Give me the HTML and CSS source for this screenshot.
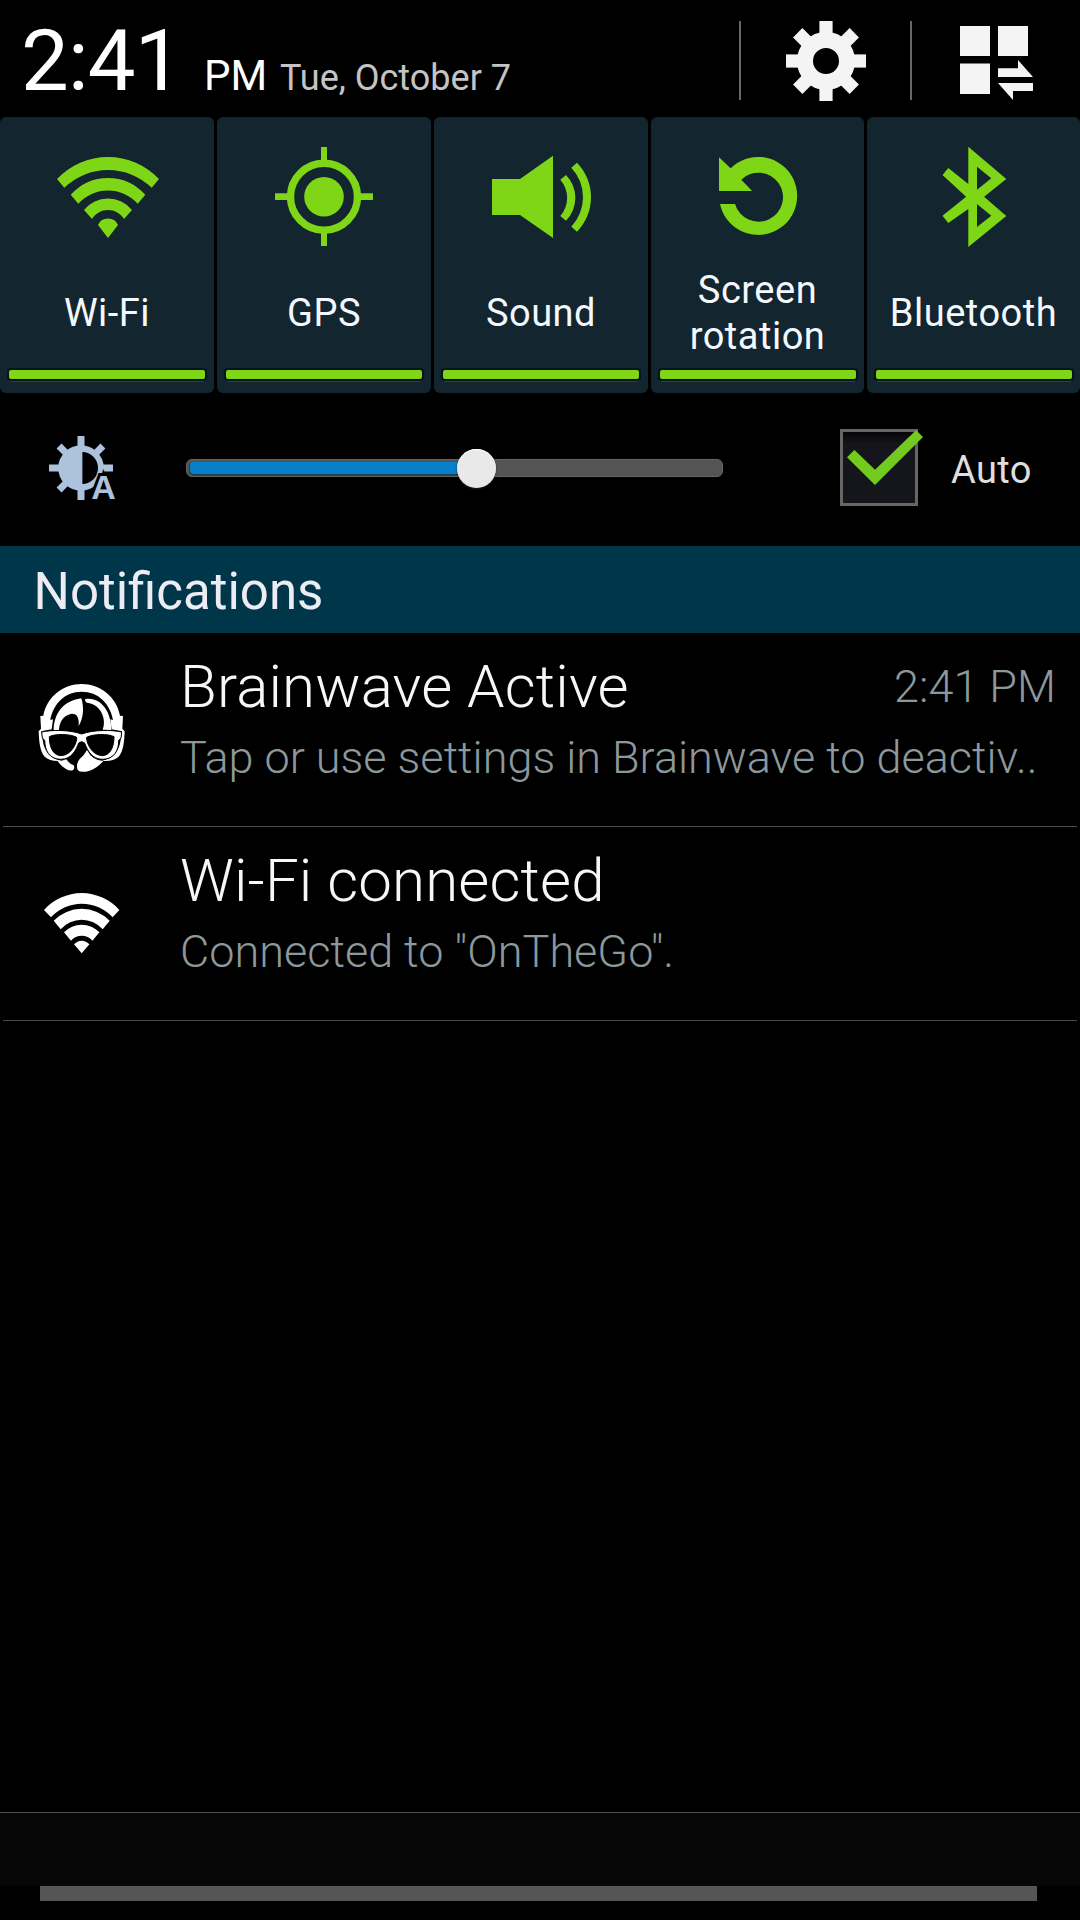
FILE: index.html
```
<!DOCTYPE html>
<html lang="en">
<head>
    <meta charset="UTF-8">
    <meta name="viewport" content="width=device-width, initial-scale=1.0">
    <title>Notifications</title>
    <link rel="stylesheet" href="styles.css">
</head>
<body>
    <header class="topbar">
        <span class="clock">2:41</span>
        <span class="ampm">PM</span>
        <span class="date">Tue, October 7</span>
        <div class="top-actions">
            <div class="action">
                <svg width="80" height="80" viewBox="-40 -40 80 80" fill="#f4f4f4">
                    <g id="teeth">
                        <rect x="-6.6" y="-40" width="13.2" height="17"/>
                        <rect x="-6.6" y="23" width="13.2" height="17"/>
                        <rect x="-40" y="-6.6" width="17" height="13.2"/>
                        <rect x="23" y="-6.6" width="17" height="13.2"/>
                    </g>
                    <use href="#teeth" transform="rotate(45)"/>
                    <circle r="21" fill="none" stroke="#f4f4f4" stroke-width="16"/>
                </svg>
            </div>
            <div class="action">
                <svg width="74" height="75" viewBox="0 0 74 75" fill="#f4f4f4">
                    <path d="M0 0H30V30H0ZM38 0H68V30H38ZM0 37.5H30V68H0ZM38 42.3H58V34L73 51H38ZM38 57H73V65H53V74Z"/>
                </svg>
            </div>
        </div>
    </header>

    <div class="toggles">
        <div class="toggle">
            <svg class="toggle-icon" viewBox="0 0 110 110">
                <path d="M5 37A70 70 0 0 1 107 37L99.7 45.7A63 63 0 0 0 12.3 45.7ZM18.7 52.7A50 50 0 0 1 93.3 52.7L85.7 61.7A40 40 0 0 0 26.3 61.7ZM32 68A31 31 0 0 1 80 68L72 77A18.7 18.7 0 0 0 40 77ZM46 83A11 11 0 0 1 66 83L56 96Z"/>
            </svg>
            <div class="toggle-label">Wi-Fi</div>
            <div class="toggle-bar"></div>
        </div>
        <div class="toggle">
            <svg class="toggle-icon" viewBox="0 0 110 110">
                <circle cx="55" cy="54.7" r="33.5" fill="none" stroke="#7fd616" stroke-width="7.4"/>
                <circle cx="55" cy="54.7" r="19.8"/>
                <path d="M52 5H58V19H52ZM52 91H58V104H52ZM6 51.2H20V58H6ZM91 51.2H104V58H91Z"/>
            </svg>
            <div class="toggle-label">GPS</div>
            <div class="toggle-bar"></div>
        </div>
        <div class="toggle">
            <svg class="toggle-icon" viewBox="0 0 110 110">
                <path d="M6 37H34L67 13.7V96L34 73H6ZM80 33A32.6 32.6 0 0 1 80 78.7L74.3 74A27.4 27.4 0 0 0 74.3 37.7ZM91 20.7A49.5 49.5 0 0 1 91 89.7L85.3 84.7A43 43 0 0 0 85.3 25.7Z"/>
            </svg>
            <div class="toggle-label">Sound</div>
            <div class="toggle-bar"></div>
        </div>
        <div class="toggle">
            <svg class="toggle-icon" viewBox="0 0 110 110">
                <path d="M16 15.3L27.6 26.3A39 39 0 1 1 17 62H32A24.5 24.5 0 1 0 38.3 37.7L49.1 49H16Z"/>
            </svg>
            <div class="toggle-label">Screen<br>rotation</div>
            <div class="toggle-bar"></div>
        </div>
        <div class="toggle">
            <svg class="toggle-icon" viewBox="0 0 110 110">
                <path fill-rule="evenodd" d="M49.3 4.7L87.3 37L65.1 54.7L87.3 74L49.3 105V67L29.3 81L23.5 73.7L47.1 54.7L23.5 33L29.3 26L49.3 42ZM58 24.7V47.7L72.3 36.3ZM58 62V85L72.3 73.7Z"/>
            </svg>
            <div class="toggle-label">Bluetooth</div>
            <div class="toggle-bar"></div>
        </div>
    </div>

    <div class="brightness">
        <svg class="brightness-icon" width="70" height="66" viewBox="-32 -32 70 66" fill="#adc2dc">
            <path d="M-3.5 -32H3.5V-20H-3.5ZM-3.5 20H3.5V32H-3.5ZM-32 -3.5H-20V3.5H-32ZM20 -3.5H32V3.5H20Z"/>
            <path d="M-3.5 -31H3.5V-20H-3.5ZM-3.5 20H3.5V31H-3.5ZM-31 -3.5H-20V3.5H-31ZM20 -3.5H31V3.5H20Z" transform="rotate(45)"/>
            <circle r="22.8"/>
            <path d="M1.4 -16A15.6 16 0 0 1 1.4 16Z" fill="#000"/>
            <text class="auto-letter" x="10.2" y="31">A</text>
        </svg>
        <div class="slider">
            <div class="slider-fill"></div>
            <div class="slider-thumb"></div>
        </div>
        <div class="checkbox">
            <svg class="check" width="80" height="58" viewBox="0 0 80 58">
                <path d="M1 28.3L8.5 21L29 40.7L70 1.3L77 8L29 56Z" fill="#72cb1e"/>
            </svg>
        </div>
        <span class="auto-label">Auto</span>
    </div>

    <h2 class="section-title">Notifications</h2>

    <div class="notification">
        <div class="notif-icon">
            <svg width="130" height="120" viewBox="0 0 390 360" fill="#fff">
                <!-- headphones -->
                <path d="M70 137C80 80 130 42 185 42C240 42 290 80 300 137L309 138L307 176L314 184C313 215 310 245 296 260C285 270 265 275 246 272C275 268 298 245 302 210L306 184L275 178L271 148L279 150C270 100 235 65 185 65C135 65 100 100 91 150L99 148L95 178L64 184L68 210C72 245 95 268 124 272C105 275 85 270 74 260C60 245 57 215 56 184L63 176L61 138Z"/>
                <!-- hair -->
                <path d="M101 180C102 135 125 93 184 85C193 115 190 145 176 168C178 142 170 129 152 132C128 138 118 158 117 180Z"/>
                <path d="M196 87C243 80 274 125 274 180L248 179C260 150 245 103 201 98Q193 93 196 87Z"/>
                <!-- glasses -->
                <path stroke="#000" stroke-width="3" fill-rule="evenodd" d="M65 186C95 179 150 179 185 192C220 179 275 179 305 186L303 204L296 211C296 242 283 267 248 268C215 268 202 240 194 219Q185 211 176 219C168 240 155 268 122 268C87 267 75 242 74 211L67 204ZM88 200C105 191 150 191 170 202C172 215 156 257 122 257C96 255 88 226 88 200ZM282 200C265 191 220 191 200 202C198 215 214 257 248 257C274 255 282 226 282 200Z"/>
                <!-- chin -->
                <path d="M113 274Q128 273 139 268Q148 281 161 286Q165 293 160 299Q153 305 138 297Q122 287 113 274Z"/>
                <path d="M201 240Q216 271 250 273Q232 294 209 302Q182 310 173 300Q167 281 179 267Q192 257 201 240Z"/>
            </svg>
        </div>
        <div class="notif-body">
            <div class="notif-head">
                <span class="notif-title">Brainwave Active</span>
                <span class="notif-time">2:41 PM</span>
            </div>
            <div class="notif-text">Tap or use settings in Brainwave to deactiv..</div>
        </div>
    </div>

    <div class="notification">
        <div class="notif-icon">
            <svg class="wifi-small" width="84" height="66" viewBox="0 0 84 66" fill="#fff">
                <path d="M4 20A50.4 50.4 0 0 1 79.4 20L72.6 27.3A42 42 0 0 0 11 27.3ZM13.7 30.7A39 39 0 0 1 69.7 30.7L62.7 39.3A27.8 27.8 0 0 0 20.7 39.3ZM24 42.3A24.4 24.4 0 0 1 59.4 42.3L52.4 50.7A14 14 0 0 0 31 50.7ZM34 54.3A10 10 0 0 1 49.4 54.3L41.7 63.3Z"/>
            </svg>
        </div>
        <div class="notif-body">
            <div class="notif-head">
                <span class="notif-title">Wi-Fi connected</span>
            </div>
            <div class="notif-text">Connected to "OnTheGo".</div>
        </div>
    </div>

    <footer class="bottom">
        <div class="carrier"></div>
        <div class="handle"></div>
    </footer>
</body>
</html>
```

FILE: styles.css
```
* {
    box-sizing: border-box;
}
body {
    margin: 0;
    width: 1080px;
    height: 1920px;
    display: flex;
    flex-direction: column;
    overflow: hidden;
    background: #000;
    color: #fff;
    font-family: Roboto, "Liberation Sans", sans-serif;
}
svg {
    display: block;
    overflow: visible;
}

/* clock row */
.topbar {
    display: flex;
    align-items: baseline;
    height: 117px;
    padding: 11px 0 0 21px;
    white-space: nowrap;
}
.clock {
    width: 183px;
    font-size: 85px;
    line-height: 100px;
    letter-spacing: -0.8px;
}
.ampm {
    width: 76px;
    font-size: 42px;
}
.date {
    font-size: 36px;
    color: #c4c4c4;
}
.top-actions {
    display: flex;
    align-self: flex-start;
    margin: 10px 0 0 auto;
}
.action {
    display: flex;
    align-items: center;
    justify-content: center;
    width: 171px;
    height: 79px;
    border-left: 2px solid #63696c;
}
.action:last-child {
    width: 170px;
    padding: 5px 0 0 1px;
}

/* quick toggles */
.toggles {
    display: grid;
    grid-template-columns: 214px 214px 214px 213px 213px;
    gap: 3px;
    height: 276px;
}
.toggle {
    display: flex;
    flex-direction: column;
    align-items: center;
    padding-top: 25px;
    background: #13252f;
    border-radius: 6px;
}
.toggle-icon {
    width: 110px;
    height: 110px;
    fill: #7fd616;
}
.toggle-label {
    display: flex;
    align-items: center;
    height: 92px;
    margin-top: 15px;
    font-size: 38px;
    line-height: 46px;
    letter-spacing: 0.5px;
    text-align: center;
    color: #f3f8ff;
}
.toggle-bar {
    width: 196px;
    height: 9px;
    margin-top: 11px;
    background: #7fd616;
    border-radius: 2px;
    box-shadow: 0 0 1px 2px #06141a, 0 3px 0 0 #34434b;
}

/* brightness */
.brightness {
    display: flex;
    align-items: center;
    height: 153px;
    padding: 0 0 3px 49px;
}
.brightness-icon {
    margin-top: 2px;
}
.auto-letter {
    font: bold 34px "Liberation Sans", sans-serif;
    stroke: #000;
    stroke-width: 6px;
    paint-order: stroke;
}
.slider {
    position: relative;
    width: 537px;
    height: 18px;
    margin-left: 67px;
    padding: 3px;
    background: #545454;
    border: 1px solid #666;
    border-radius: 6px;
}
.slider-fill {
    width: 290px;
    height: 12px;
    margin-top: -1px;
    background: #0780c8;
    border-radius: 4px 0 0 4px;
    box-shadow: 0 1px 0 1px #1f3f52;
}
.slider-thumb {
    position: absolute;
    left: 270px;
    top: -11px;
    width: 39px;
    height: 39px;
    border-radius: 50%;
    background: #e9e9e9;
    box-shadow: 0 1px 2px #222, inset 0 1px 1px #fff;
}
.checkbox {
    position: relative;
    width: 78px;
    height: 77px;
    margin: -2px 0 0 117px;
    background: linear-gradient(#050506, #15161b 12px);
    border: 3px solid #666;
}
.check {
    position: absolute;
    left: 3px;
    top: -3px;
}
.auto-label {
    margin: 4px 0 0 33px;
    font-size: 38px;
    letter-spacing: 0.4px;
    color: #dedede;
}

.section-title {
    margin: 0;
    height: 87px;
    padding-left: 33.5px;
    font-size: 51px;
    font-weight: 400;
    line-height: 91px;
    background: #00364a;
    color: #ececf2;
}

/* notification list */
.notification {
    display: flex;
    height: 194px;
    margin: 0 3px;
    border-bottom: 1px solid #4a4a4a;
}
.notif-icon {
    width: 177px;
    padding: 37px 0 0 17px;
}
.wifi-small {
    margin: 26px 0 0 20px;
}
.notif-body {
    flex: 1;
    padding: 19px 21px 0 0;
    font-weight: 300;
    white-space: nowrap;
}
.notif-head {
    display: flex;
    justify-content: space-between;
}
.notif-title {
    font-size: 60px;
    line-height: 70px;
    letter-spacing: 0.15px;
    color: #f7f7f7;
}
.notif-time {
    font-size: 45px;
    line-height: 70px;
    color: #8b989c;
}
.notif-text {
    margin-top: 10px;
    font-size: 45px;
    line-height: 52px;
    color: #8b989c;
}

/* bottom drag handle */
.bottom {
    height: 108px;
    margin-top: auto;
}
.carrier {
    height: 74px;
    background: #060606;
    border-top: 1px solid #505050;
}
.handle {
    width: 997px;
    height: 15px;
    margin-left: 40px;
    background: #555;
}
```
